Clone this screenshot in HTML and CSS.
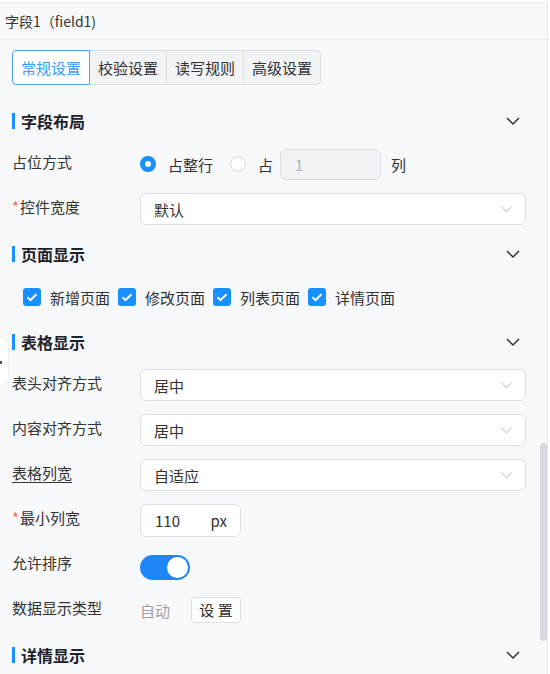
FILE: index.html
```html
<!DOCTYPE html>
<html lang="zh-CN">
<head>
    <meta charset="UTF-8">
    <meta name="viewport" content="width=device-width, initial-scale=1.0">
    <title>字段属性</title>
    <link rel="stylesheet" href="styles.css">
</head>
<body>
    <div class="panel">
        <div class="title">字段1（field1)</div>

        <div class="tabs">
            <div class="tab active">常规设置</div>
            <div class="tab">校验设置</div>
            <div class="tab">读写规则</div>
            <div class="tab">高级设置</div>
        </div>

        <!-- 字段布局 -->
        <div class="section">
            <div class="section-head">
                <span class="section-title">字段布局</span>
                <svg class="fold" viewBox="0 0 16 16"><path d="M2 5l6 6 6-6" /></svg>
            </div>
            <div class="form-row">
                <div class="label">占位方式</div>
                <div class="control">
                    <span class="radio checked"><i></i>占整行</span>
                    <span class="radio"><i></i>占</span>
                    <div class="num-input disabled">1</div>
                    <span class="unit">列</span>
                </div>
            </div>
            <div class="form-row">
                <div class="label required">控件宽度</div>
                <div class="control">
                    <div class="select">默认<svg class="arrow" viewBox="0 0 11 7"><path d="M0.5 0.5l5 5.5 5-5.5" /></svg></div>
                </div>
            </div>
        </div>

        <!-- 页面显示 -->
        <div class="section">
            <div class="section-head">
                <span class="section-title">页面显示</span>
                <svg class="fold" viewBox="0 0 16 16"><path d="M2 5l6 6 6-6" /></svg>
            </div>
            <div class="checks">
                <span class="check"><i><svg viewBox="0 0 18 18"><path d="M4.5 9.2l3 3 6-6" /></svg></i>新增页面</span>
                <span class="check"><i><svg viewBox="0 0 18 18"><path d="M4.5 9.2l3 3 6-6" /></svg></i>修改页面</span>
                <span class="check"><i><svg viewBox="0 0 18 18"><path d="M4.5 9.2l3 3 6-6" /></svg></i>列表页面</span>
                <span class="check"><i><svg viewBox="0 0 18 18"><path d="M4.5 9.2l3 3 6-6" /></svg></i>详情页面</span>
            </div>
        </div>

        <!-- 表格显示 -->
        <div class="section">
            <div class="section-head">
                <span class="section-title">表格显示</span>
                <svg class="fold" viewBox="0 0 16 16"><path d="M2 5l6 6 6-6" /></svg>
            </div>
            <div class="form-row">
                <div class="label">表头对齐方式</div>
                <div class="control">
                    <div class="select">居中<svg class="arrow" viewBox="0 0 11 7"><path d="M0.5 0.5l5 5.5 5-5.5" /></svg></div>
                </div>
            </div>
            <div class="form-row">
                <div class="label">内容对齐方式</div>
                <div class="control">
                    <div class="select">居中<svg class="arrow" viewBox="0 0 11 7"><path d="M0.5 0.5l5 5.5 5-5.5" /></svg></div>
                </div>
            </div>
            <div class="form-row">
                <div class="label"><span class="tip">表格列宽</span></div>
                <div class="control">
                    <div class="select">自适应<svg class="arrow" viewBox="0 0 11 7"><path d="M0.5 0.5l5 5.5 5-5.5" /></svg></div>
                </div>
            </div>
            <div class="form-row">
                <div class="label required">最小列宽</div>
                <div class="control">
                    <div class="num-box"><span>110</span><span>px</span></div>
                </div>
            </div>
            <div class="form-row">
                <div class="label">允许排序</div>
                <div class="control">
                    <div class="switch on"><i></i></div>
                </div>
            </div>
            <div class="form-row">
                <div class="label">数据显示类型</div>
                <div class="control">
                    <span class="muted">自动</span>
                    <div class="btn">设 置</div>
                </div>
            </div>
        </div>

        <!-- 详情显示 -->
        <div class="section">
            <div class="section-head">
                <span class="section-title">详情显示</span>
                <svg class="fold" viewBox="0 0 16 16"><path d="M2 5l6 6 6-6" /></svg>
            </div>
        </div>

        <div class="handle"></div>
        <div class="scroll-thumb"></div>
    </div>
</body>
</html>
```

FILE: styles.css
```css
:root {
    --blue: #1890ff;
    --border: #dcdfe6;
    --text: #303133;
    --panel: #f7f8fa;
}

* {
    box-sizing: border-box;
}
body {
    margin: 0;
    background: #fff;
    color: var(--text);
    font-family: "Noto Sans CJK SC", "Noto Sans", sans-serif;
    font-size: 15px;
}

.panel {
    position: relative;
    width: 548px;
    height: 672px;
    margin-top: 2px;
    background: var(--panel);
    border-top: 1px solid #e6e8eb;
    border-right: 1px solid #e6e8eb;
    overflow: hidden;
}
.title {
    height: 37px;
    line-height: 36px;
    padding-left: 5px;
    font-size: 14px;
    color: #333;
    border-bottom: 1px solid #e8eaee;
}

/* tabs */
.tabs {
    display: flex;
    width: fit-content;
    margin: 10px 0 20px 12px;
}
.tab {
    width: 78px;
    height: 35px;
    line-height: 33px;
    margin-left: -1px;
    text-align: center;
    background: #f2f3f5;
    border: 1px solid var(--border);
}
.tab:first-child {
    margin-left: 0;
    border-radius: 4px 0 0 4px;
}
.tab:last-child {
    border-radius: 0 4px 4px 0;
}
.tab.active {
    position: relative;
    z-index: 1;
    background: #fff;
    border-color: #4ea2f8;
    color: #3d9bf5;
}

/* sections */
.section {
    padding: 4px 21px 0 12px;
}
.section-head {
    display: flex;
    align-items: center;
    justify-content: space-between;
    height: 24px;
    margin-bottom: 15px;
}
.section-title {
    padding-left: 6px;
    border-left: 3px solid var(--blue);
    line-height: 16px;
    font-size: 16px;
    font-weight: bold;
    color: #1f2329;
}
.fold {
    width: 16px;
    height: 16px;
    margin-right: 5px;
    fill: none;
    stroke: #333;
    stroke-width: 1.5;
}

/* form rows */
.form-row {
    display: flex;
    align-items: flex-start;
    height: 32px;
    margin-bottom: 13px;
}
.label {
    flex: none;
    width: 128px;
    line-height: 28px;
    color: #333;
}
.required::before {
    content: "*";
    color: #f56c6c;
    margin-right: 1px;
}
.tip {
    text-decoration: underline;
    text-underline-offset: 3px;
}
.control {
    flex: 1;
    display: flex;
    align-items: center;
    height: 32px;
}

.radio {
    display: flex;
    align-items: center;
    margin-right: 17px;
}
.radio i {
    width: 16px;
    height: 16px;
    margin-right: 12px;
    border-radius: 50%;
    border: 1px solid #d4d7de;
    background: #fff;
}
.radio.checked i {
    border: 5px solid var(--blue);
}
.num-input {
    width: 101px;
    height: 31px;
    margin-left: -10px;
    padding-left: 14px;
    line-height: 29px;
    border: 1px solid var(--border);
    border-radius: 6px;
    background: #fff;
}
.num-input.disabled {
    background: #f0f2f5;
    color: #b0b3b8;
}
.unit {
    margin-left: 10px;
}

.select {
    flex: 1;
    display: flex;
    align-items: center;
    justify-content: space-between;
    height: 32px;
    padding: 0 13px;
    background: #fff;
    border: 1px solid var(--border);
    border-radius: 6px;
}
.arrow {
    width: 11px;
    height: 7px;
    fill: none;
    stroke: #b4b8bf;
    stroke-width: 1;
}

/* checkboxes */
.checks {
    display: flex;
    align-items: center;
    height: 32px;
    margin: 0 0 13px 11px;
}
.check {
    display: flex;
    align-items: center;
    margin-right: 8px;
}
.check i {
    width: 18px;
    height: 18px;
    margin-right: 9px;
    border-radius: 3px;
    background: var(--blue);
}
.check svg {
    display: block;
    width: 18px;
    height: 18px;
    fill: none;
    stroke: #fff;
    stroke-width: 2;
}

.num-box {
    display: flex;
    align-items: center;
    justify-content: space-between;
    width: 101px;
    height: 33px;
    padding: 0 13px 0 14px;
    background: #fff;
    border: 1px solid var(--border);
    border-radius: 6px;
}

.switch {
    display: flex;
    justify-content: flex-end;
    width: 50px;
    height: 25px;
    margin-top: 5px;
    padding: 2px;
    border-radius: 13px;
    background: #dcdfe6;
}
.switch.on {
    background: #1f87f5;
}
.switch i {
    width: 21px;
    height: 21px;
    border-radius: 50%;
    background: #fff;
}

.muted {
    margin-right: 21px;
    color: #a0a0a0;
}
.btn {
    width: 50px;
    height: 26px;
    line-height: 24px;
    text-align: center;
    background: #fff;
    border: 1px solid var(--border);
    border-radius: 4px;
}

/* collapse handle and scrollbar sit on top of the panel */
.handle {
    position: absolute;
    left: 0;
    top: 335px;
    width: 8px;
    height: 48px;
    background: #fff;
    border-radius: 0 8px 8px 0;
    box-shadow: 0 0 3px rgba(0, 0, 0, 0.08);
}
.handle::after {
    content: "";
    position: absolute;
    left: 0;
    top: 23px;
    width: 2px;
    height: 3px;
    background: #555;
}
.scroll-thumb {
    position: absolute;
    left: 540px;
    top: 440px;
    width: 7px;
    height: 198px;
    border-radius: 4px;
    background: #d6d9df;
}
```
